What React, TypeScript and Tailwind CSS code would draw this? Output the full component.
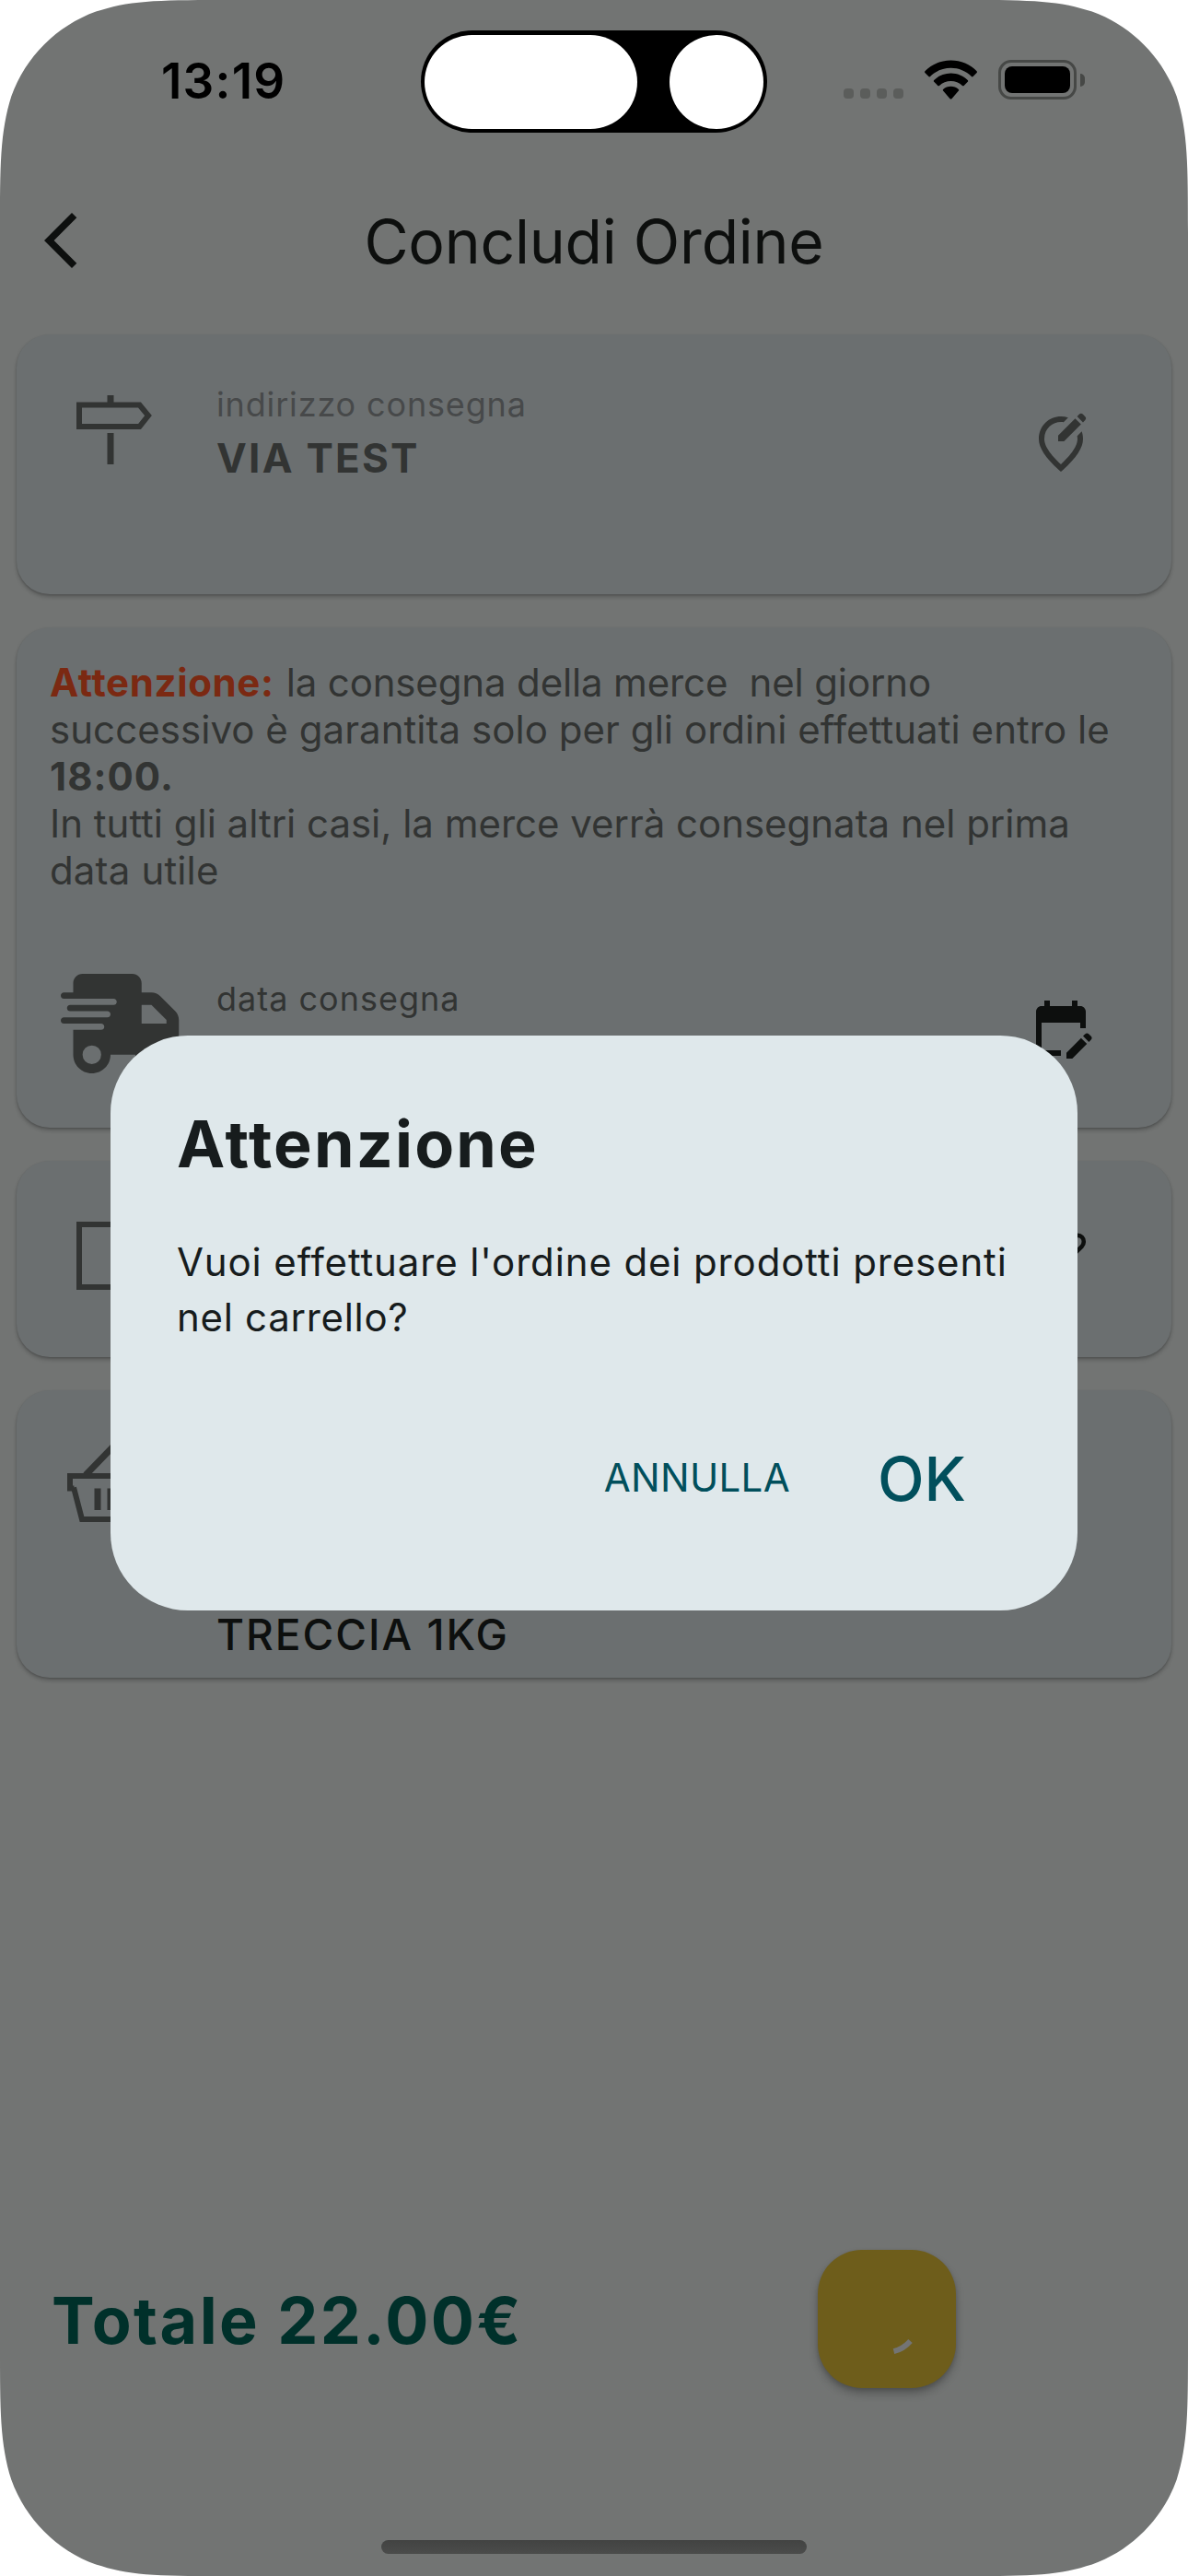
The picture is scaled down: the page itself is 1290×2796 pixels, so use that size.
import React from "react";
import { MdOutlineEditLocationAlt, MdEditCalendar } from "react-icons/md";
import { FaTruckFast } from "react-icons/fa6";

const CORNER =
  "M0 0H252.2C179.6 0 143.3 0 110.5 10.8L104.2 12.4C61.5 27.9 27.9 61.5 12.4 104.2C0 143.3 0 179.6 0 252.2Z";

function ScreenCorners() {
  return (
    <svg className="pointer-events-none absolute inset-0" width="1290" height="2796" viewBox="0 0 1290 2796" fill="#fff">
      <path d={CORNER} />
      <path d={CORNER} transform="translate(1290 0) scale(-1 1)" />
      <path d={CORNER} transform="translate(0 2796) scale(1 -1)" />
      <path d={CORNER} transform="translate(1290 2796) scale(-1 -1)" />
    </svg>
  );
}

function WifiIcon() {
  return (
    <svg className="ml-[23px]" width="57" height="43" viewBox="0 0 57 43" fill="#000">
      <path d="M28.5 0.5C39.300 0.500 49.500 4.700 56.600 12.200C57.100 12.700 57.100 13.400 56.600 13.900L52.600 18C52.100 18.500 51.400 18.500 50.900 18C44.900 12.100 37 8.800 28.500 8.800S12.100 12.100 6.100 18C5.600 18.500 4.900 18.500 4.400 18L0.400 13.900C-0.100 13.400 -0.100 12.700 0.400 12.200C7.500 4.700 17.700 0.500 28.500 0.500Z" />
      <path d="M28.500 14.600C35.400 14.600 41.900 17.300 46.800 22.100C47.300 22.600 47.300 23.300 46.800 23.800L42.700 27.900C42.200 28.400 41.500 28.400 41 27.900C37.600 24.700 33.200 23 28.500 23S19.400 24.700 16 27.900C15.500 28.400 14.800 28.400 14.300 27.900L10.200 23.800C9.700 23.300 9.700 22.600 10.200 22.100C15.100 17.300 21.600 14.600 28.500 14.600Z" />
      <path d="M28.500 28.800C31.600 28.800 34.600 29.900 36.900 31.900C37.400 32.400 37.400 33.100 36.900 33.600L29.400 42.200C28.900 42.700 28.100 42.700 27.600 42.200L20.100 33.600C19.600 33.100 19.600 32.400 20.100 31.900C22.400 29.900 25.400 28.800 28.500 28.800Z" />
    </svg>
  );
}

function StatusBar() {
  return (
    <div className="flex h-[177px] w-full items-start">
      <div className="mt-[57px] ml-[175px] w-[282px] text-[53px] leading-[62px] font-semibold tracking-[1.2px] text-black">13:19</div>
      <div className="mt-[33px] flex h-[111px] w-[376px] items-center justify-between rounded-full bg-black px-[4px]">
        <div className="h-[102px] w-[231px] rounded-full bg-white" />
        <div className="size-[102px] rounded-full bg-white" />
      </div>
      <div className="mt-[65px] ml-[83px] flex h-[43px] items-start">
        <div className="mt-[31px] flex gap-[7px]">
          <span className="size-[11px] rounded-[4px] bg-[#5b5d5b]" />
          <span className="size-[11px] rounded-[4px] bg-[#5b5d5b]" />
          <span className="size-[11px] rounded-[4px] bg-[#5b5d5b]" />
          <span className="size-[11px] rounded-[4px] bg-[#5b5d5b]" />
        </div>
        <WifiIcon />
        <div className="ml-[23px] flex items-center">
          <div className="h-[43px] w-[85px] rounded-[14px] border-[3px] border-[#464846] p-[4px]">
            <div className="size-full rounded-[8px] bg-black" />
          </div>
          <div className="ml-[4px] h-[14px] w-[5px] rounded-r-full bg-[#464846]" />
        </div>
      </div>
    </div>
  );
}

function AppBar() {
  return (
    <div className="grid h-[168px] w-full grid-cols-[160px_1fr_160px] items-center">
      <svg className="ml-[30px]" width="72" height="72" viewBox="0 0 24 24" fill="#0d0f0e">
        <path d="M17.770 3.770 16 2 6 12l10 10 1.770-1.770L9.540 12z" />
      </svg>
      <h1 className="mt-[1px] text-center text-[66px] leading-[80px] tracking-[-0.22px] text-[#0d0f0e]">Concludi Ordine</h1>
    </div>
  );
}

function Card({ className, children }: { className: string; children: React.ReactNode }) {
  return (
    <section className={`mx-[18px] w-[1254px] rounded-[36px] bg-[#6b6f70] shadow-[0_3px_4px_rgba(0,0,0,0.22),0_1px_2px_rgba(0,0,0,0.14)] ${className}`}>
      {children}
    </section>
  );
}

function SignpostIcon() {
  return (
    <svg className="mt-[66px] ml-[65px] shrink-0" width="82" height="75" viewBox="0 0 82 75" fill="none" stroke="#323433">
      <path d="M3 10.500H68.500L78 22L68.500 34H3Z" strokeWidth="6" />
      <path d="M37 0V8M37 41V75" strokeWidth="7" />
    </svg>
  );
}

function BasketIcon() {
  return (
    <svg width="96" height="94" viewBox="0 0 96 94" fill="none" stroke="#323433" strokeWidth="6">
      <path d="M21 41L48 13L75 41" strokeWidth="7" />
      <path d="M8 54.500L17 89H79L88 54.500" />
      <path d="M8.500 55.500H4V42H92V55.500H87.500" />
      <path d="M34 55.500V79M48 55.500V79M62 55.500V79" strokeWidth="7" />
    </svg>
  );
}

function NoteIcon() {
  return (
    <svg className="mt-[76px] mr-[87px]" width="60" height="60" viewBox="0 0 60 60" fill="none" stroke="#0d0f0e" strokeWidth="4.600">
      <path d="M40 8C41.500 6 43 4.900 45 4.900C49 4.900 51.800 8 51.800 11.700C51.800 14 51 15.600 49.500 17.200L22 44H12V35Z" />
    </svg>
  );
}

function ConfirmDialog() {
  return (
    <div className="absolute inset-x-0 top-0 flex h-[2871px] items-center justify-center">
      <div className="flex h-[624px] w-[1050px] flex-col rounded-[84px] bg-[#dfe8eb] p-[72px]">
        <h2 className="-mt-[2px] text-[70px] leading-[96px] font-bold tracking-[2.19px] whitespace-nowrap text-[#171c1d]">Attenzione</h2>
        <div className="mt-[50px] text-[42px] leading-[60px] whitespace-nowrap text-[#171c1d]">
          <p className="tracking-[0.86px]">Vuoi effettuare l'ordine dei prodotti presenti</p>
          <p className="tracking-[0.7px]">nel carrello?</p>
        </div>
        <div className="mt-[72px] flex h-[144px] items-center justify-end pr-[49px] text-[#014f5c]">
          <button className="mr-[95px] pt-[1px] text-[42px] leading-[60px] tracking-[0.33px]">ANNULLA</button>
          <button className="pt-[3px] text-[66px] leading-[80px] font-medium">OK</button>
        </div>
      </div>
    </div>
  );
}

export default function App() {
  return (
    <div className="relative flex h-[2796px] w-[1290px] flex-col overflow-hidden bg-[#727473] font-['Inter',sans-serif]">
      <StatusBar />
      <AppBar />

      <main className="mt-[18px] flex flex-col gap-[36px]">
        <Card className="flex h-[282px] justify-between">
          <div className="flex">
            <SignpostIcon />
            <div className="ml-[70px] pt-[54px]">
              <div className="text-[36px] leading-[44px] tracking-[0.85px] text-[#47494a]">indirizzo consegna</div>
              <div className="mt-[9px] text-[44px] leading-[54px] font-bold tracking-[2.23px] text-[#323433]">VIA TEST</div>
            </div>
          </div>
          <MdOutlineEditLocationAlt className="mt-[83px] mr-[84px]" size={72} color="#323433" />
        </Card>

        <Card className="h-[543px] pt-[34px]">
          <div className="ml-[36px] text-[42px] leading-[51px] whitespace-pre text-[#323433]">
            <div className="flex">
              <div className="font-bold tracking-[0.64px] text-[#7b2912]">Attenzione:</div>
              <div className="ml-[13px] tracking-[-0.15px]">{"la consegna della merce  nel giorno"}</div>
            </div>
            <div className="tracking-[0.05px]">successivo è garantita solo per gli ordini effettuati entro le</div>
            <div className="font-bold tracking-[1.02px]">18:00.</div>
            <div className="-tracking-[0.02px]">In tutti gli altri casi, la merce verrà consegnata nel prima</div>
            <div className="tracking-[0.15px]">data utile</div>
          </div>
          <div className="mt-[87px] flex justify-between">
            <div className="flex">
              <FaTruckFast className="ml-[48px] h-[108px] w-[135px]" color="#323433" />
              <div className="mt-[5px] ml-[34px] text-[36px] leading-[44px] tracking-[1px] text-[#323433]">data consegna</div>
            </div>
            <MdEditCalendar className="mt-[23px] mr-[84px]" size={72} color="#0d0f0e" />
          </div>
        </Card>

        <Card className="flex h-[213px] justify-between">
          <div className="mt-[66px] ml-[65px] size-[74px] border-[6px] border-[#323433]" />
          <NoteIcon />
        </Card>

        <Card className="h-[312px]">
          <div className="h-[237px] pt-[51px] pl-[54px]">
            <BasketIcon />
          </div>
          <div className="ml-[217px] text-[46px] leading-[56px] font-medium tracking-[2px] text-[#0d0f0e]">TRECCIA 1KG</div>
        </Card>
      </main>

      <footer className="mt-[621px] flex h-[150px] items-center">
        <div className="ml-[56px] w-[832px] pt-[3px] text-[70px] leading-[84px] font-bold tracking-[2.46px] whitespace-nowrap text-[#00302a]">
          Totale 22.00€
        </div>
        <div className="size-[150px] rounded-[48px] bg-[#6e5d1b] shadow-[0_6px_10px_rgba(0,0,0,0.24),0_2px_4px_rgba(0,0,0,0.12)]">
          <svg width="150" height="150" viewBox="0 0 150 150" fill="none" stroke="#737474" strokeWidth="6">
            <path d="M82.500 110.200A36 36 0 0 0 100.500 99" />
          </svg>
        </div>
      </footer>

      <ConfirmDialog />
      <div className="absolute bottom-[24px] left-[414px] h-[15px] w-[462px] rounded-full bg-linear-to-b from-[#424342] to-[#4b4c4b]" />
      <ScreenCorners />
    </div>
  );
}
